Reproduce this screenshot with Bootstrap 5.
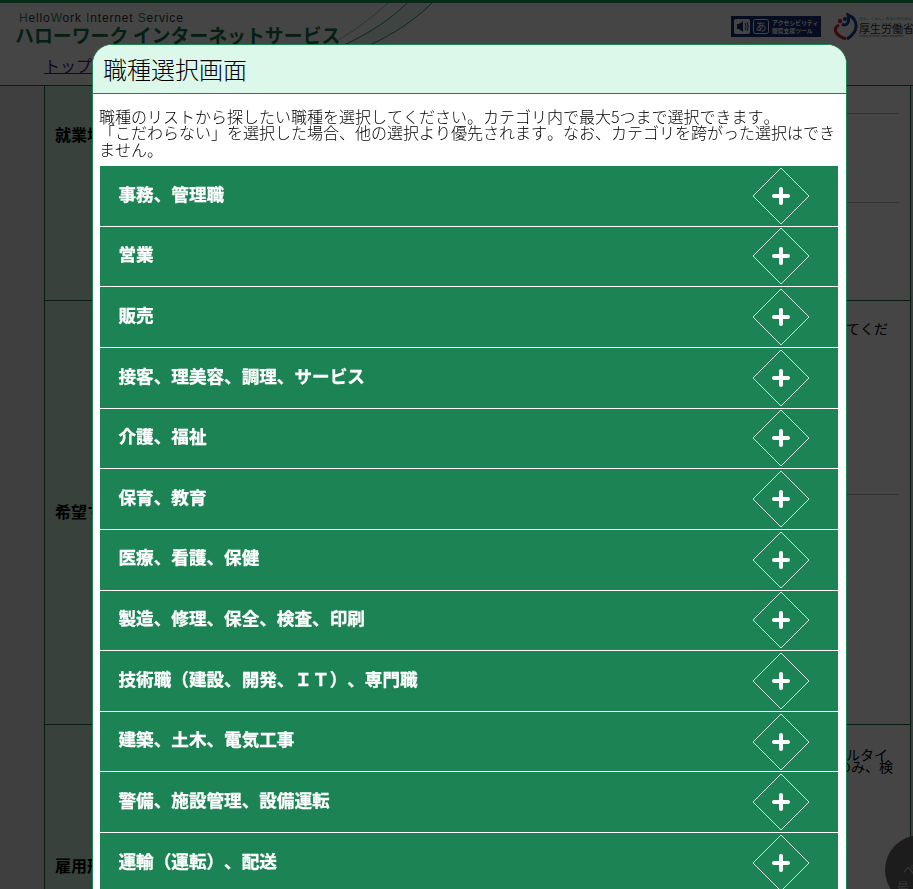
<!DOCTYPE html>
<html lang="ja">
<head>
<meta charset="utf-8">
<title>職種選択画面</title>
<link href="https://cdn.jsdelivr.net/npm/bootstrap@5.3.0/dist/css/bootstrap.min.css" rel="stylesheet">
<style>
html,body{height:889px;overflow:hidden}
body{background:#e8e8e8;color:#000;font-family:"Noto Sans CJK JP","Liberation Sans",sans-serif;font-size:16px;line-height:1.5;text-spacing-trim:space-all;font-kerning:none}
.hw-head{height:86px;background:#fff;border-top:3px solid #1f9a5c;border-bottom:1px solid #1d6b45;position:relative;overflow:hidden}
.hw-swoosh{position:absolute;left:320px;top:0}
.hw-brand{padding:8px 0 0 15px;position:relative}
.hw-en{font:12px/14px "Liberation Sans",sans-serif;letter-spacing:.85px;padding-left:4px;color:#333}
.hw-en b{font-weight:400;color:#1a9a5a}
.hw-ja{font-weight:700;font-size:18.9px;line-height:20px;color:#14754a;white-space:nowrap}
.hw-nav{padding:8px 0 0 44px;position:relative}
.hw-nav a{color:#551a8b;font-size:16px;line-height:24px}
.hw-tools{position:absolute;left:731px;top:13px}
.hw-badge{width:90px;height:21px;background:#17307a;color:#fff;padding:2px 3px;flex:none}
.hw-badge svg{display:block;flex:none}
.hw-badge-txt{font-size:5.8px;line-height:8px;white-space:nowrap;margin-left:2px;font-weight:700}
.hw-mh{margin:-3px 0 0 12px;flex:none}
.hw-mh svg{flex:none}
.hw-mh-txt{margin-left:1px;width:54px}
.hw-ruby{font-size:3.8px;line-height:6px;color:#1a9a5a;white-space:nowrap}
.hw-mhname{font-size:11px;line-height:12px;white-space:nowrap;color:#333}
.hw-mheng{font-size:2.5px;line-height:4px;white-space:nowrap;color:#555}
.hw-table{margin-left:44px;width:867px;border-left:1px solid #1d6b45;border-right:1px solid #1d6b45;background:#fff}
.hw-row{border-bottom:1px solid #1d6b45}
.hw-row1{height:215px}
.hw-row2{height:424px}
.hw-row3{height:300px}
.hw-th{width:220px;background:#cfeede;font-weight:700;padding-left:10px;flex:none}
.hw-th1{padding-top:36px}
.hw-th2{padding-top:198px}
.hw-th3{padding-top:128px}
.hw-td{flex:1 1 auto;padding-right:11px;min-width:0}
.hw-sep{border-bottom:1px solid #bbb}
.hw-h27{height:28px}
.hw-h89{height:89px}
.hw-h160{height:160px}
.hw-line{padding-top:21px;padding-right:11px;font-size:14px;line-height:13px;text-align:right;white-space:nowrap}
.hw-l3a{padding-top:23px;padding-right:11px;font-size:14px;line-height:12px;text-align:right;white-space:nowrap}
.hw-l3b{padding-right:6px;font-size:14px;line-height:12px;text-align:right;white-space:nowrap}
.hw-totop{position:fixed;left:885px;top:835px;width:70px;height:70px;border-radius:50%;background:#686868;color:#c8c8c8;font-size:12px;line-height:17px;padding-top:26px;z-index:5}
.hw-totop span{display:block}
.hw-tt1{padding-left:18px}
.hw-tt2{padding-left:12px}
.hw-dim{position:fixed;left:0;top:0;width:913px;height:889px;background-color:#000;opacity:.73;z-index:1050}
.hw-modal{display:block;overflow:hidden}
.hw-dialog{width:755px;max-width:none;margin:44px 0 0 92px}
.hw-content{border:1px solid #1b8354;border-radius:20px 20px 0 0;background:#fff;overflow:hidden}
.hw-mhead{height:49px;background:#dcf8ea;border-bottom:1px solid #1b8354;padding:0 0 0 10px;border-radius:0}
.hw-title{font-size:24px;line-height:36px;font-weight:300;margin:0}
.hw-body{padding:14px 8px 0 7px}
.hw-desc{line-height:16.4px;margin:0 0 8.8px -1px;font-weight:300}
.hw-item{height:60.65px;background:#1b8354;border-bottom:1px solid #fff;color:#fff;font-weight:700;font-size:17.6px;padding:0 28px 0 18.5px}
.hw-item-t{position:relative;top:-2px;-webkit-text-stroke:.3px #fff}
</style>
</head>
<body>
<header class="hw-head">
  <svg class="hw-swoosh" width="130" height="46" viewBox="0 0 130 46" fill="none" aria-hidden="true">
    <path d="M24 42C50 30 72 15 87 0H112C97 15 76 30 50 42Z" fill="#d4eddf" opacity=".5"/>
    <path d="M13 40C35 28 55 12 68 0" stroke="#8ad0a8" stroke-width="1"/>
    <path d="M24 42C50 30 72 15 87 0" stroke="#2f9a60" stroke-width="1"/>
    <path d="M50 42C76 30 97 15 112 0" stroke="#2f9a60" stroke-width="1"/>
  </svg>
  <div class="hw-brand">
    <div class="hw-en"><b>H</b>ello<b>W</b>ork <b>I</b>nternet <b>S</b>ervice</div>
    <div class="hw-ja">ハローワーク インターネットサービス</div>
  </div>
  <nav class="hw-nav"><a href="#">トップ</a></nav>
  <div class="hw-tools d-flex align-items-start">
    <div class="hw-badge d-flex align-items-center">
      <svg width="36" height="17" viewBox="0 0 36 17" aria-hidden="true">
        <rect x="0" y="1" width="16" height="15" rx="2" fill="#fff"/>
        <path d="M3 6h2l4-3v11l-4-3H3z" fill="#17307a"/>
        <path d="M11 5q2 3.500 0 7M13 4q2.500 4.500 0 9" stroke="#17307a" fill="none"/>
        <rect x="19.500" y="1.500" width="15" height="14" rx="2" fill="none" stroke="#fff"/>
        <text x="27" y="13" font-size="11" fill="#fff" text-anchor="middle" font-family="Noto Sans CJK JP">あ</text>
      </svg>
      <div class="hw-badge-txt">アクセシビリティ<br>閲覧支援ツール</div>
    </div>
    <div class="hw-mh d-flex align-items-center">
      <svg width="25" height="27" viewBox="0 0 25 27" fill="none" aria-hidden="true">
        <path d="M6 12C0 15 1 22 13 26" stroke="#d8262c" stroke-width="3"/>
        <circle cx="7" cy="8" r="2.200" fill="#d8262c"/>
        <path d="M9 11C14 14 17 9 15 2C25 6 27 18 14 26" stroke="#1d3f9a" stroke-width="3"/>
        <circle cx="12" cy="6" r="2" fill="#1d3f9a"/>
      </svg>
      <div class="hw-mh-txt">
        <div class="hw-ruby">ひと、くらし、みらいのために</div>
        <div class="hw-mhname">厚生労働省</div>
        <div class="hw-mheng">Ministry of Health, Labour and Welfare</div>
      </div>
    </div>
  </div>
</header>

<main class="hw-table">
  <div class="hw-row hw-row1 d-flex">
    <div class="hw-th hw-th1">就業場所</div>
    <div class="hw-td"><div class="hw-sep hw-h27"></div><div class="hw-sep hw-h89"></div></div>
  </div>
  <div class="hw-row hw-row2 d-flex">
    <div class="hw-th hw-th2">希望する職種</div>
    <div class="hw-td"><div class="hw-line">してくだ</div><div class="hw-sep hw-h160"></div></div>
  </div>
  <div class="hw-row hw-row3 d-flex">
    <div class="hw-th hw-th3">雇用形態</div>
    <div class="hw-td"><div class="hw-l3a">フルタイ</div><div class="hw-l3b">のみ、検</div></div>
  </div>
</main>

<div class="hw-totop"><span class="hw-tt1">ペ</span><span class="hw-tt2">最</span></div>

<div class="hw-dim"></div>
<div class="modal hw-modal" tabindex="-1" role="dialog" aria-modal="true">
  <div class="modal-dialog hw-dialog">
    <div class="modal-content hw-content">
      <div class="modal-header hw-mhead">
        <h2 class="modal-title hw-title">職種選択画面</h2>
      </div>
      <div class="modal-body hw-body">
        <p class="hw-desc">職種のリストから探したい職種を選択してください。カテゴリ内で最大5つまで選択できます。<br>「こだわらない」を選択した場合、他の選択より優先されます。なお、カテゴリを跨がった選択はできません。</p>
        <div id="jobs"></div>
      </div>
    </div>
  </div>
</div>

<script src="https://cdn.jsdelivr.net/npm/bootstrap@5.3.0/dist/js/bootstrap.bundle.min.js"></script>
<script>
var names=["事務、管理職","営業","販売","接客、理美容、調理、サービス","介護、福祉","保育、教育","医療、看護、保健","製造、修理、保全、検査、印刷","技術職（建設、開発、ＩＴ）、専門職","建築、土木、電気工事","警備、施設管理、設備運転","運輸（運転）、配送"];
document.getElementById('jobs').innerHTML=names.map(function(n){
  return '<div class="hw-item d-flex align-items-center justify-content-between"><span class="hw-item-t">'+n+'</span>'+
  '<svg width="58" height="58" viewBox="0 0 58 58" fill="none" aria-hidden="true"><path d="M29 1 57 29 29 57 1 29Z" stroke="#fff" stroke-opacity=".8"/><path d="M22 29H36M29 22V36" stroke="#fff" stroke-width="4" stroke-linecap="round"/></svg></div>';
}).join('');
</script>
</body>
</html>
